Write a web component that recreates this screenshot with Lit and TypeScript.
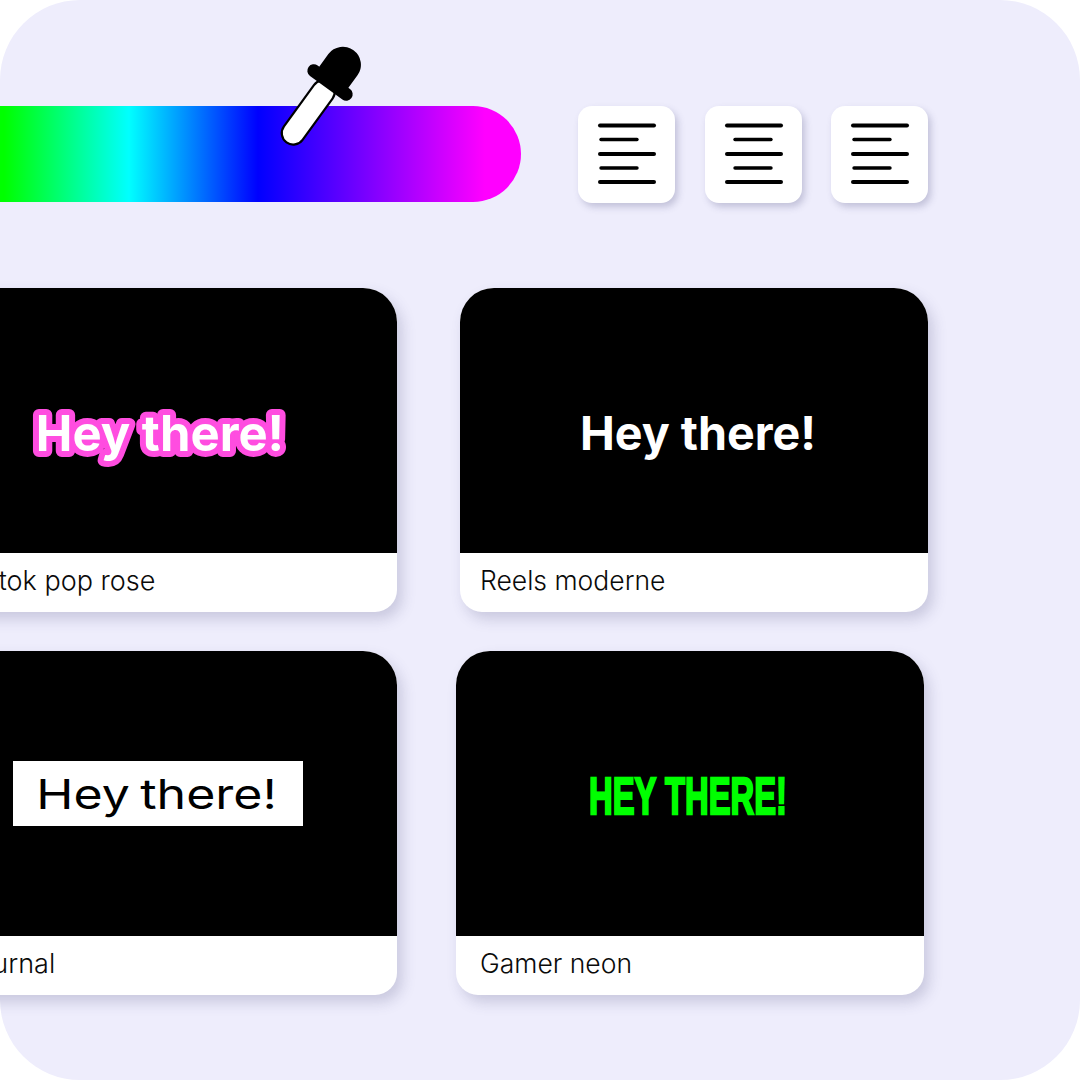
import { LitElement, html, css, svg } from "lit";
import { customElement } from "lit/decorators.js";

const lines = (short: "left" | "center") => {
  const x = short === "left" ? 23 : 30;
  return svg`
    <line x1="22" x2="76" y1="19.5" y2="19.5"/>
    <line x1=${x} x2=${x + 36} y1="33.5" y2="33.5" class="thin"/>
    <line x1="22" x2="76" y1="48" y2="48"/>
    <line x1=${x} x2=${x + 36} y1="62" y2="62" class="thin"/>
    <line x1="22" x2="76" y1="76" y2="76"/>`;
};

@customElement("app-root")
export class AppRoot extends LitElement {
  static styles = css`
    :host { display: block; width: 1080px; height: 1080px; background: #fff; font-family: Inter, sans-serif; }
    .stage { position: relative; width: 1080px; height: 1080px; box-sizing: border-box; padding-top: 106px; background: #eeedfc; border-radius: 80px; overflow: hidden; }
    .top { display: flex; align-items: flex-start; }
    .bar { width: 621px; height: 96px; margin-left: -100px; margin-right: 57px; border-radius: 0 48px 48px 0;
      background: linear-gradient(90deg, #00ff00 0, #00ff00 104px, #00ffff 229px, #0000ff 358px, #ff00ff 585px, #ff00ff 621px); }
    .tools { display: flex; gap: 29.5px; }
    .tool { width: 97px; height: 97px; background: #fff; border-radius: 14px; box-shadow: 3px 4px 7px rgba(70,70,120,.26); }
    .tool svg { display: block; width: 97px; height: 97px; }
    .tool line { stroke: #000; stroke-width: 4px; stroke-linecap: round; }
    .tool line.thin { stroke-width: 3.4px; }
    .grid { display: grid; grid-template-columns: 468px 468px; column-gap: 63px; row-gap: 39px; margin: 85px 0 0 -71px; }
    .card { display: flex; flex-direction: column; background: #fff; border-radius: 34px 34px 22px 22px; overflow: hidden; box-shadow: 5px 7px 14px rgba(70,70,120,.22); }
    .shift { margin: 0 4px 0 -4px; }
    .preview { height: 265px; background: #000; display: flex; align-items: center; justify-content: center; }
    .tall .preview { height: 285px; }
    .label { height: 59px; box-sizing: border-box; padding: 11px 0 0 20px; font-size: 26.5px; font-weight: 350; line-height: 32px; color: #0a0a0a; white-space: nowrap; }
    .far .label { padding: 12px 0 0 32px; font-size: 27px; }
    .shift .label { padding-left: 24px; }
    .pink { display: block; width: 268px; height: 70px; transform: translate(-3px, 13px); }
    .pink text { font-family: Inter, sans-serif; font-size: 49px; font-weight: 700; fill: #fff; stroke: #ff4de0; stroke-width: 12px; stroke-linejoin: round; paint-order: stroke fill; text-anchor: middle; }
    .white { font-size: 46.6px; font-weight: 700; color: #fff; transform: translate(4px, 12px); }
    .boxed { width: 290px; height: 65px; display: flex; align-items: center; justify-content: center; background: #fff; color: #000; transform: translate(-5px, 0); }
    .boxed span { display: block; font-size: 41px; font-weight: 400; transform: translateX(-1px) scaleX(1.22); white-space: nowrap; word-spacing: -3px; }
    .neon { display: block; font-family: "Liberation Sans", sans-serif; font-size: 52px; font-weight: 700; color: #00ff00; -webkit-text-stroke: 2.4px #00ff00; transform: scaleX(.63); white-space: nowrap; }
    .neon-wrap { transform: translate(-2px, 2px); }
    .dropper { position: absolute; left: 270px; top: 40px; width: 100px; height: 115px; }
  `;

  render() {
    return html`
      <div class="stage">
        <div class="top">
          <div class="bar"></div>
          <div class="tools">
            <div class="tool"><svg viewBox="0 0 97 97">${lines("left")}</svg></div>
            <div class="tool"><svg viewBox="0 0 97 97">${lines("center")}</svg></div>
            <div class="tool"><svg viewBox="0 0 97 97">${lines("left")}</svg></div>
          </div>
        </div>
        <div class="grid">
          <div class="card far">
            <div class="preview"><svg class="pink" viewBox="0 0 268 70"><text x="134" y="52">Hey there!</text></svg></div>
            <div class="label">Tiktok pop rose</div>
          </div>
          <div class="card">
            <div class="preview"><span class="white">Hey there!</span></div>
            <div class="label">Reels moderne</div>
          </div>
          <div class="card tall far">
            <div class="preview"><div class="boxed"><span>Hey there!</span></div></div>
            <div class="label">Journal</div>
          </div>
          <div class="card tall shift">
            <div class="preview"><div class="neon-wrap"><span class="neon">HEY THERE!</span></div></div>
            <div class="label">Gamer neon</div>
          </div>
        </div>
        <svg class="dropper" viewBox="270 40 100 115">
          <g transform="translate(330 82.5) rotate(36)">
            <rect x="-11.5" y="0" width="23" height="74" rx="11.5" fill="#fff" stroke="#000" stroke-width="2.2"/>
            <path d="M-18 0V-22A18 18 0 0 1 18 -22V0Z" fill="#000"/>
            <rect x="-26.5" y="-6.5" width="53" height="13" rx="6.5" fill="#000"/>
          </g>
        </svg>
      </div>
    `;
  }
}
